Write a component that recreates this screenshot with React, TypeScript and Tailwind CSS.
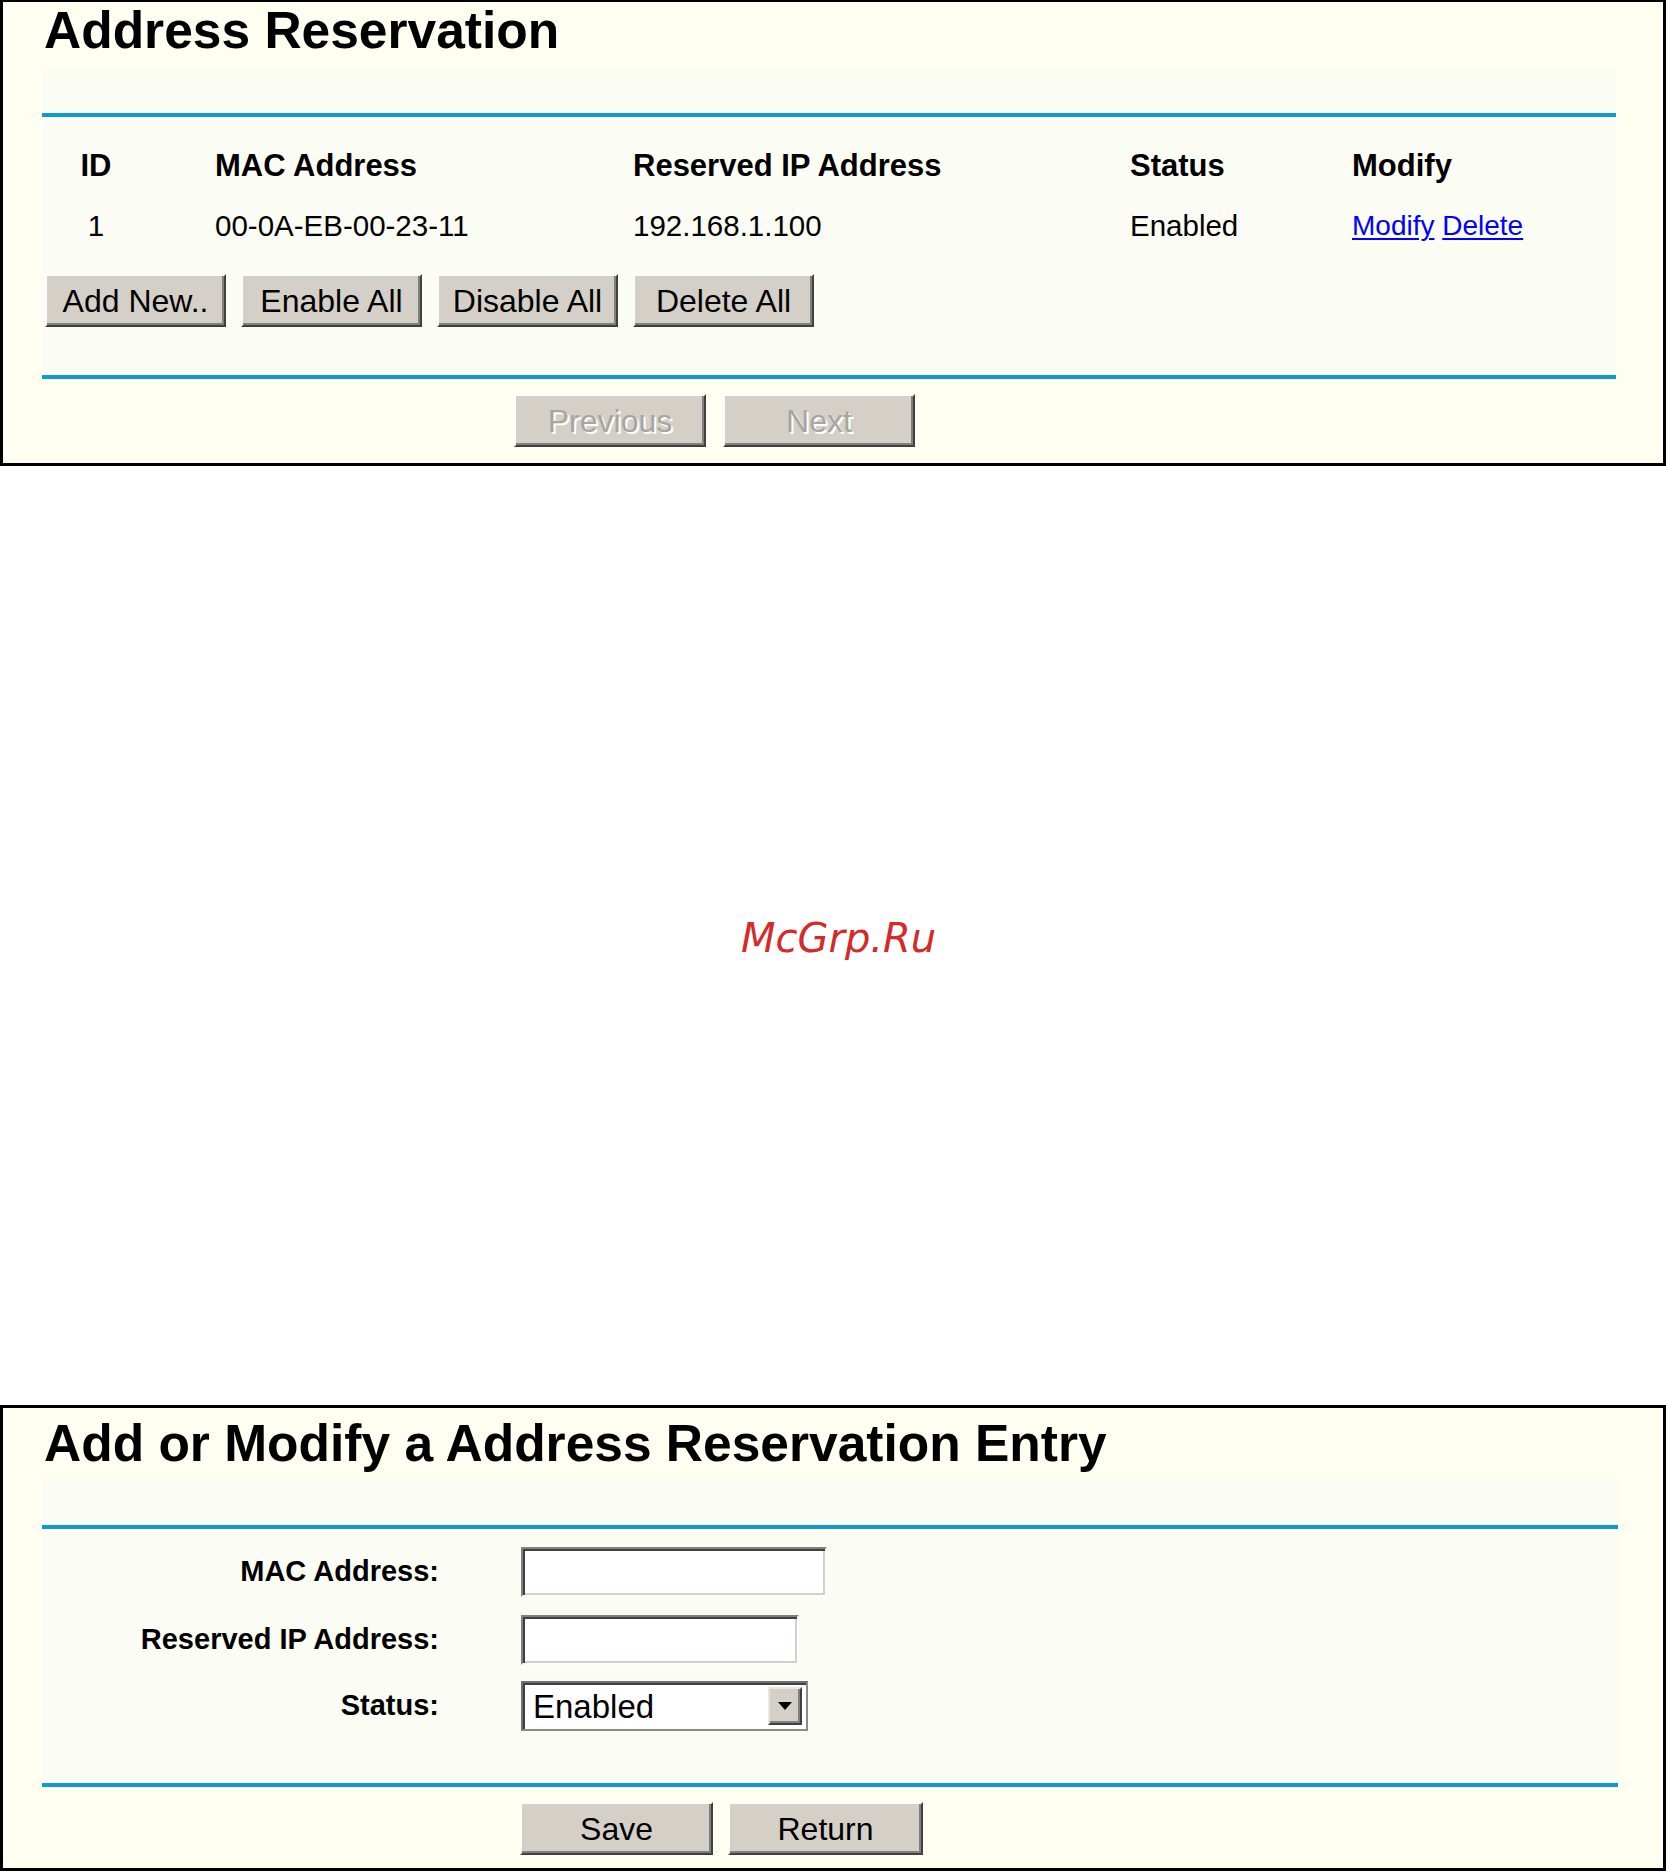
import React from "react";

function Line() {
  return <div className="h-[4px] bg-[#0e99cf]" />;
}

function Btn({ label, cls, disabled }: { label: string; cls: string; disabled?: boolean }) {
  return (
    <div
      className={`${cls} h-[53px] shrink-0 bg-[#d4d0c8] border-2 border-t-[#ffffff] border-l-[#ffffff] border-b-[#404040] border-r-[#404040] shadow-[inset_-2px_-2px_0_#808080] flex items-center justify-center text-[32px] leading-[32px] whitespace-nowrap ${
        disabled ? "text-[#a7a6a2] [text-shadow:2px_2px_0_#ffffff]" : "text-black"
      }`}
    >
      {label}
    </div>
  );
}

function TextBox({ cls }: { cls: string }) {
  return (
    <div
      className={`${cls} h-[50px] bg-white border-2 border-t-[#808080] border-l-[#808080] border-b-[#ffffff] border-r-[#ffffff] shadow-[inset_2px_2px_0_#404040,inset_-2px_-2px_0_#d4d0c8]`}
    />
  );
}

function FormRow({ label, children }: { label: string; children: React.ReactNode }) {
  return (
    <div className="flex items-center h-[50px]">
      <div className="w-[397px] shrink-0 text-right font-bold text-[29px] leading-[30px] whitespace-nowrap -mt-[3px]">
        {label}
      </div>
      <div className="ml-[82px]">{children}</div>
    </div>
  );
}

const cols = "grid grid-cols-[173px_418px_497px_222px_1fr]";

export default function App() {
  return (
    <div className="w-[1666px] bg-white text-black font-['Liberation_Sans',Arial,sans-serif]">
      {/* Panel 1 */}
      <div className="h-[466px] border-black border-t-2 border-l-[3px] border-r-[3px] border-b-[3px] bg-[#fefef1]">
        <div className="h-[67px] pt-[3px] pl-[41px]">
          <div className="text-[51.5px] leading-[51px] font-bold whitespace-nowrap">Address Reservation</div>
        </div>
        <div className="ml-[39px] w-[1574px] bg-[#fbfdf4]">
          <div className="h-[44px]" />
          <Line />
          <div className={`${cols} mt-[33px] h-[31px] text-[31px] leading-[31px] font-bold whitespace-nowrap`}>
            <div className="w-[108px] text-center">ID</div>
            <div>MAC Address</div>
            <div>Reserved IP Address</div>
            <div>Status</div>
            <div>Modify</div>
          </div>
          <div className={`${cols} mt-[30px] h-[30px] text-[29.5px] leading-[30px] whitespace-nowrap`}>
            <div className="w-[108px] text-center">1</div>
            <div>00-0A-EB-00-23-11</div>
            <div>192.168.1.100</div>
            <div>Enabled</div>
            <div className="text-[28px]">
              <a href="#" className="text-[#0000ff] underline decoration-2 underline-offset-[3px]">
                Modify
              </a>{" "}
              <a href="#" className="text-[#0000ff] underline decoration-2 underline-offset-[3px]">
                Delete
              </a>
            </div>
          </div>
          <div className="flex gap-[15px] pl-[3px] mt-[33px]">
            <Btn label="Add New.." cls="w-[181px]" />
            <Btn label="Enable All" cls="w-[181px]" />
            <Btn label="Disable All" cls="w-[181px]" />
            <Btn label="Delete All" cls="w-[181px]" />
          </div>
          <div className="h-[48px]" />
          <Line />
        </div>
        <div className="flex gap-[17px] pl-[511px] mt-[15px]">
          <Btn label="Previous" cls="w-[192px]" disabled />
          <Btn label="Next" cls="w-[192px]" disabled />
        </div>
      </div>

      {/* Watermark */}
      <div className="mt-[452px] mb-[447px] h-[40px] pl-[741px]">
        <span className="font-['DejaVu_Sans',sans-serif] italic text-[40px] leading-[40px] text-[#d42a2a]">
          McGrp.Ru
        </span>
      </div>

      {/* Panel 2 */}
      <div className="h-[466px] border-black border-[3px] bg-[#fefef1]">
        <div className="h-[70px] pt-[10px] pl-[41px]">
          <div className="text-[51.5px] leading-[51px] font-bold whitespace-nowrap">
            Add or Modify a Address Reservation Entry
          </div>
        </div>
        <div className="ml-[39px] w-[1576px] bg-[#fbfdf4]">
          <div className="h-[47px]" />
          <Line />
          <div className="h-[18px]" />
          <FormRow label="MAC Address:">
            <TextBox cls="w-[306px]" />
          </FormRow>
          <div className="h-[18px]" />
          <FormRow label="Reserved IP Address:">
            <TextBox cls="w-[278px]" />
          </FormRow>
          <div className="h-[16px]" />
          <FormRow label="Status:">
            <div className="w-[287px] h-[50px] bg-white border-2 border-t-[#707070] border-l-[#707070] border-b-[#8a8a8a] border-r-[#8a8a8a] shadow-[inset_2px_2px_0_#404040] flex items-stretch p-[4px] pl-[2px]">
              <div className="flex-1 flex items-center pl-[8px] text-[33px] leading-[33px]">Enabled</div>
              <div className="w-[34px] bg-[#d4d0c8] border-2 border-t-[#e8e6e0] border-l-[#e8e6e0] border-b-[#404040] border-r-[#404040] shadow-[inset_-2px_-2px_0_#808080] flex items-center justify-center">
                <svg width="14" height="8" viewBox="0 0 14 8">
                  <polygon points="0,0 14,0 7,8" fill="#000000" />
                </svg>
              </div>
            </div>
          </FormRow>
          <div className="h-[52px]" />
          <Line />
        </div>
        <div className="flex gap-[15px] pl-[517px] mt-[15px]">
          <Btn label="Save" cls="w-[193px]" />
          <Btn label="Return" cls="w-[195px]" />
        </div>
      </div>
    </div>
  );
}
